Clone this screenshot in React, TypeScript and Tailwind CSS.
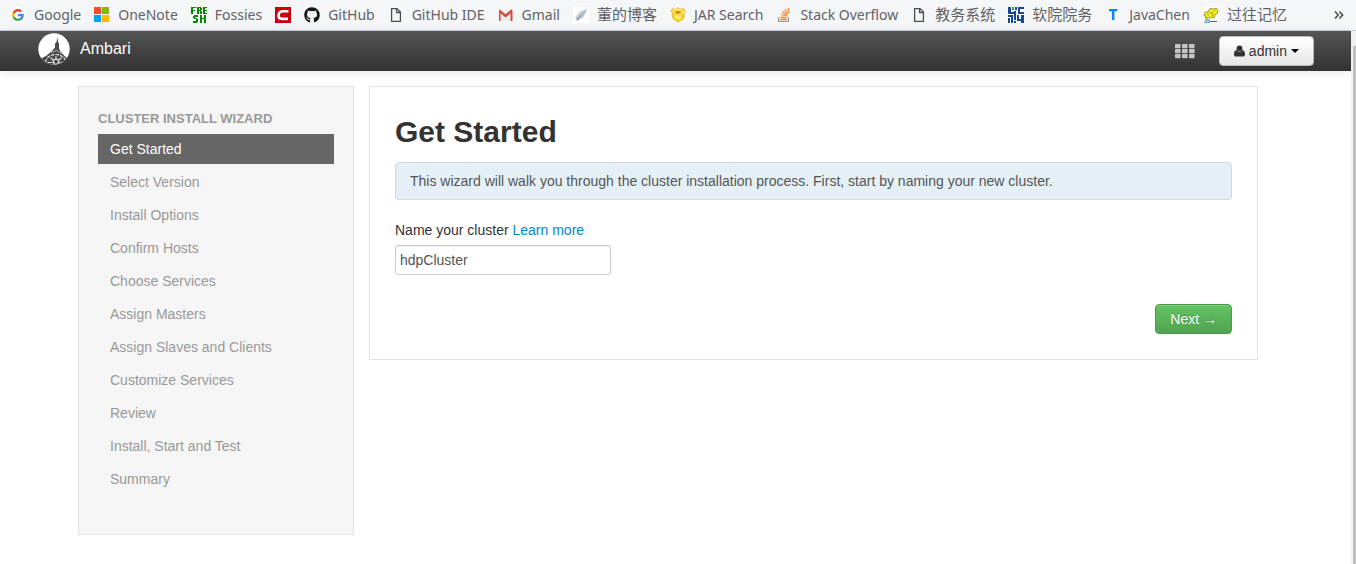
import type { ReactNode } from "react";
import { FaGithub } from "react-icons/fa";

const GoogleIcon = () => (
  <svg viewBox="0 0 16 16" className="size-4">
    <circle cx="8" cy="8" r="8" fill="#fff" />
    <g transform="translate(2 2) scale(.25)">
      <path fill="#4285f4" d="M47 24.6c0-1.600-.1-3.100-.4-4.600H24v9h12.900c-.6 3-2.300 5.500-4.800 7.200v6h7.700c4.500-4.200 7.200-10.300 7.200-17.600z" />
      <path fill="#34a853" d="M24 48c6.500 0 11.900-2.100 15.900-5.800l-7.700-6c-2.200 1.400-4.900 2.300-8.200 2.300-6.300 0-11.600-4.200-13.500-9.900H2.600v6.200C6.500 42.600 14.600 48 24 48z" />
      <path fill="#fbbc05" d="M10.500 28.600c-1-3-1-6.200 0-9.200v-6.200H2.600a24 24 0 0 0 0 21.600z" />
      <path fill="#ea4335" d="M24 9.500c3.500 0 6.700 1.200 9.200 3.600l6.900-6.900C35.900 2.400 30.500 0 24 0 14.600 0 6.500 5.400 2.600 13.200l7.900 6.200C12.400 13.700 17.700 9.500 24 9.500z" />
    </g>
  </svg>
);

const OneNoteIcon = () => (
  <svg viewBox="0 0 16 16" className="size-4" shapeRendering="crispEdges">
    <path fill="#f25022" d="M0 0h7v7H0z" />
    <path fill="#7fba00" d="M8 0h7v7H8z" />
    <path fill="#00a4ef" d="M0 8h7v7H0z" />
    <path fill="#ffb900" d="M8 8h7v7H8z" />
  </svg>
);

const FreshIcon = () => (
  <svg viewBox="0 0 16 16" className="size-4" shapeRendering="crispEdges">
    <path fill="#fff" d="M0 0h16v16H0z" />
    <path
      fill="#008a00"
      d="M0 0h5v1H2v2h2v1H2v3H0zM6 0h4v1h1v2h-1v1h1v3H9V4H8v3H6zM8 1v2h1V1zM12 0h4v1h-2v2h2v1h-2v2h2v1h-4zM3 8h4v2H4v1h2v1h1v3H6v1H2v-2h3v-2H3v-1H2V9h1zM9 8h2v3h2V8h2v8h-2v-4h-2v4H9z"
    />
  </svg>
);

const RedCIcon = () => (
  <svg viewBox="0 0 16 16" className="size-4">
    <path fill="#c8000f" d="M0 0h16v16H0z" />
    <path fill="none" stroke="#fff" strokeWidth="2.600" d="M13.500 4.300H8.500C5 4.300 3.500 6 3.500 8.500 3.500 11 4.500 11.900 7 11.900H13" />
  </svg>
);

const FileIcon = () => (
  <svg viewBox="0 0 16 16" className="size-4" fill="none" stroke="#4a4d52" strokeWidth="1.300">
    <path d="M3.600 1.600h5.400l3.400 3.500v9.300H3.600z" />
    <path d="M8.600 1.600v3.900h3.800" />
  </svg>
);

const GmailIcon = () => (
  <svg viewBox="0 0 16 16" className="size-4">
    <path fill="#ececec" d="M1.500 3h12v11h-12z" />
    <path fill="#d54b3d" d="M1 3.200Q1 2.500 1.800 2.500L7.500 7.200 13.200 2.500Q14.500 2.500 14.500 3.600V14H12.500V6.300L7.500 10.500 2.500 6.300V14H1z" />
  </svg>
);

const PlaneIcon = () => (
  <svg viewBox="0 0 16 16" className="size-4">
    <path fill="#fff" d="M0 0h16v16H0z" />
    <path fill="#c3ced8" d="M14.500 2 7 4.500 1.800 11 4 13z" />
    <path fill="#8798a8" d="M14.500 2 4 11.500l-.5 2.500L6 12.500z" />
    <path fill="#b3c0cc" d="M14.500 2 5 12.300 10 10.500z" />
  </svg>
);

const JarIcon = () => (
  <svg viewBox="0 0 16 16" className="size-4">
    <path fill="#f9cf24" stroke="#e3a51a" strokeWidth=".6" d="m.6 4 2.600-2.400 2.300.8L7.500.6l2.500 1.700L13 1.500 15.400 4l-1.800 2 .9 2.200-.9 3.800L8 15 3.200 12 2 8.200l.8-2.200z" />
    <path fill="#fff06a" d="M3.500 3 8 1.500 12.500 3 14 5.500 10 7.500H5.500L2.300 5z" />
    <path fill="#d08a10" d="m4 5 4-1.400L12 5 8 7.200z" />
    <path fill="#fff06a" d="M4.500 8.500h7L11 11l-3 1.800L5 11z" />
  </svg>
);

const StackIcon = () => (
  <svg viewBox="0 0 16 16" className="size-4" fill="none">
    <path stroke="#9a9c9f" strokeWidth="1.200" d="M2.600 10v4.400h9.800V10" />
    <path stroke="#f48024" strokeWidth="1.200" d="M4.500 12.400h6M4.500 10.100l6 .8M5 7.300l5.700 2M6.300 4.500l5 3.700M8.700 2.300l3.300 4.700M12 .8l1.100 5.400" />
  </svg>
);

const SchoolIcon = () => (
  <svg viewBox="0 0 16 16" className="size-4" shapeRendering="crispEdges">
    <path fill="#fff" d="M0 0h16v16H0z" />
    <path
      fill="#17488f"
      d="M0 0h3v5h3V4h2v9H6V7H0zM0 8h5v8H3v-6H0zM0 11h2v5H0zM7 0h2v3H7zM10 0h6v2h-4v3h4v2h-6zM9 8h2v4h2V8h3v8h-3v-2H9zM6 14h2v2H6z"
    />
    <path fill="#18b539" d="M4 0h2v3H4z" />
  </svg>
);

const TIcon = () => (
  <svg viewBox="0 0 16 16" className="size-4">
    <path fill="#0a84ff" d="M4 2h8.300v2.200H9.400V13H6.900V4.200H4z" />
  </svg>
);

const ElephantIcon = () => (
  <svg viewBox="0 0 16 16" className="size-4">
    <path fill="#fff" d="M0 0h16v16H0z" />
    <path
      fill="#f4ee1c"
      stroke="#6c6a12"
      strokeWidth=".7"
      d="M1 8.500 2 5.500l3-1L7 1.500l3 .5L13.500 1.400 15 3.500l-.7 3-2.300 1-.5 3-2 .6-.8-1.600L7 11.500 5.200 10 4 12 2.300 11l.4-2z"
    />
    <path fill="none" stroke="#5d5b16" strokeWidth=".6" d="M6 4.500 8 6.500 10.500 5M4 7l2 1M11.500 3.700h.8M9 8.500l1.500-1" />
    <path stroke="#2d7794" strokeWidth="1" d="M2 13.200h5M7 14.500h7M1 15.200h6" />
  </svg>
);

const AmbariLogo = () => (
  <svg viewBox="0 0 32 32" className="size-8">
    <defs>
      <clipPath id="disc">
        <circle cx="16" cy="16" r="15.700" />
      </clipPath>
    </defs>
    <g clipPath="url(#disc)">
      <path fill="#fff" d="M0 0h32v32H0z" />
      <path fill="#4a4a4a" d="M19.300 4 20 9l1 1.500V15l1.500 3.500 4 4.500 6 4.500V33H0v-6l8-4 6-5 3-3.500V10.500L18.500 9z" />
      <path fill="none" stroke="#ddd" strokeWidth="1.200" d="M7.500 29c1-5 5.500-7.500 10.500-7.500S27 24.500 28 29" strokeDasharray="3.500 1" />
      <path stroke="#ddd" strokeWidth="1.100" d="M18 23v4M12.500 24.500l3 3M23.500 24.500l-3 3M9.500 29.500h5M21.500 29.500h5" />
      <circle cx="18" cy="28.800" r="2.600" fill="none" stroke="#ddd" strokeWidth="1.200" />
      <path fill="none" stroke="#ccc" strokeWidth=".8" d="M13 19.500 18.500 17.500 24 20.500" />
    </g>
  </svg>
);

const UserIcon = () => (
  <svg viewBox="0 0 12 12" className="mr-1 h-3 w-[11px]" fill="#333">
    <ellipse cx="6" cy="3.300" rx="3.200" ry="3.300" />
    <path d="M3 5C1 5.200 0 7.200 0 9.800 0 11.200.8 12 2 12h8c1.200 0 2-.8 2-2.200C12 7.200 11 5.200 9 5 8.300 6.200 7.200 7 6 7s-2.300-.8-3-2z" />
  </svg>
);

const bookmarks: { label: string; icon: ReactNode; cjk?: boolean }[] = [
  { label: "Google", icon: <GoogleIcon /> },
  { label: "OneNote", icon: <OneNoteIcon /> },
  { label: "Fossies", icon: <FreshIcon /> },
  { label: "", icon: <RedCIcon /> },
  { label: "GitHub", icon: <FaGithub className="size-4 text-[#14171a]" /> },
  { label: "GitHub IDE", icon: <FileIcon /> },
  { label: "Gmail", icon: <GmailIcon /> },
  { label: "董的博客", icon: <PlaneIcon />, cjk: true },
  { label: "JAR Search", icon: <JarIcon /> },
  { label: "Stack Overflow", icon: <StackIcon /> },
  { label: "教务系统", icon: <FileIcon />, cjk: true },
  { label: "软院院务", icon: <SchoolIcon />, cjk: true },
  { label: "JavaChen", icon: <TIcon /> },
  { label: "过往记忆", icon: <ElephantIcon />, cjk: true },
];

const steps = [
  "Get Started",
  "Select Version",
  "Install Options",
  "Confirm Hosts",
  "Choose Services",
  "Assign Masters",
  "Assign Slaves and Clients",
  "Customize Services",
  "Review",
  "Install, Start and Test",
  "Summary",
];

function BookmarkBar() {
  return (
    <nav
      aria-label="Bookmarks"
      className="flex h-[31px] items-center border-b border-[#c9cde6] bg-[#f5f6f8] pr-3 pl-[10px] font-['Noto_Sans','Noto_Sans_CJK_SC',sans-serif] text-sm leading-5 text-[#5f6368]"
    >
      <ul className="flex items-center gap-[13px]">
        {bookmarks.map((b, i) => (
          <li key={i}>
            <a href="#" aria-label={b.label || "Bookmark"} className="flex items-center gap-2 whitespace-nowrap">
              {b.icon}
              {b.label && <span className={b.cjk ? "pb-0.5 text-[15px] leading-5" : "text-sm leading-5"}>{b.label}</span>}
            </a>
          </li>
        ))}
      </ul>
      <button aria-label="More bookmarks" className="ml-auto">
        <svg viewBox="0 0 10 10" className="size-[10px]" fill="none" stroke="#4f5358" strokeWidth="1.700">
          <path d="m1 1.500 3.200 3.500L1 8.500M5.400 1.500 8.600 5 5.400 8.500" />
        </svg>
      </button>
    </nav>
  );
}

function Header() {
  return (
    <header className="flex h-10 items-center bg-linear-to-b from-[#555] to-[#333] pr-[37px] pl-[38px] shadow-[0_1px_10px_rgba(0,0,0,0.1)]">
      <a href="#" className="flex items-center gap-[10px] pb-1 text-base leading-5 text-white">
        <AmbariLogo />
        <span>Ambari</span>
      </a>
      <button aria-label="Views" className="ml-auto">
        <svg viewBox="0 0 20 15" className="h-[15px] w-5" fill="#c4c4c4">
          {[0, 7, 14].map((x) =>
            [0, 5, 10].map((y) => <rect key={`${x}-${y}`} x={x} y={y} width="5.600" height="4.300" rx=".7" />),
          )}
        </svg>
      </button>
      <button className="ml-6 flex h-[30px] items-center rounded border border-[#bbb] bg-linear-to-b from-white to-[#e6e6e6] px-[14px] text-sm text-[#333]">
        <UserIcon />
        admin
        <svg viewBox="0 0 8 4" className="ml-1 h-1 w-2">
          <path d="M0 0h8L4 4z" />
        </svg>
      </button>
    </header>
  );
}

function Sidebar() {
  return (
    <nav
      aria-label="Cluster install wizard"
      className="w-[276px] shrink-0 border border-[#e3e3e3] bg-[#f5f5f5] px-[19px] pt-[22px] pb-10"
    >
      <h2 className="mb-[5px] text-[13px] leading-5 font-bold text-[#999]">CLUSTER INSTALL WIZARD</h2>
      <ul className="flex flex-col gap-[3px] text-sm leading-5">
        {steps.map((s, i) => (
          <li key={s}>
            <a href="#" className={i === 0 ? "block bg-[#666] px-3 py-[5px] text-white" : "block px-3 py-[5px] text-[#999]"}>
              {s}
            </a>
          </li>
        ))}
      </ul>
    </nav>
  );
}

function Wizard() {
  return (
    <main className="min-w-0 flex-1 border border-[#e3e3e3] bg-white p-[25px] text-sm leading-5 text-[#333]">
      <h1 className="mb-[10px] text-[30px] leading-10 font-bold">Get Started</h1>
      <p className="mb-5 rounded border border-[#cddae0] bg-[#e4f0f5] px-[14px] py-2 text-[#555]">
        This wizard will walk you through the cluster installation process. First, start by naming your new cluster.
      </p>
      <div className="mb-[5px]">
        <label htmlFor="cluster">Name your cluster</label>{" "}
        <a href="#" className="text-[#0088cc]">
          Learn more
        </a>
      </div>
      <input
        id="cluster"
        type="text"
        defaultValue="hdpCluster"
        className="block h-[30px] w-[216px] rounded-[3px] border border-[#ccc] bg-white px-1 text-[#555] shadow-[inset_0_1px_1px_rgba(0,0,0,0.075)]"
      />
      <div className="mt-[29px] flex justify-end">
        <button className="h-[30px] rounded border border-[#4b9a4b] bg-linear-to-b from-[#62c462] to-[#51a351] px-[14px] text-white shadow-[inset_0_1px_0_rgba(255,255,255,0.2)] [text-shadow:0_-1px_0_rgba(0,0,0,0.25)]">
          Next →
        </button>
      </div>
    </main>
  );
}

export default function App() {
  return (
    <div className="flex min-h-screen flex-col bg-white font-['Liberation_Sans',Arial,sans-serif]">
      <BookmarkBar />
      <div className="flex flex-1">
        <div className="min-w-0 flex-1">
          <Header />
          <div className="flex items-start gap-[15px] pt-[15px] pr-[93px] pb-7 pl-[78px]">
            <Sidebar />
            <Wizard />
          </div>
        </div>
        <div aria-hidden="true" className="flex w-[5px] flex-col bg-[#f1f1f1] pt-[15px] pl-[2px]">
          <div className="flex-1 bg-[#c1c1c1]" />
        </div>
      </div>
    </div>
  );
}
